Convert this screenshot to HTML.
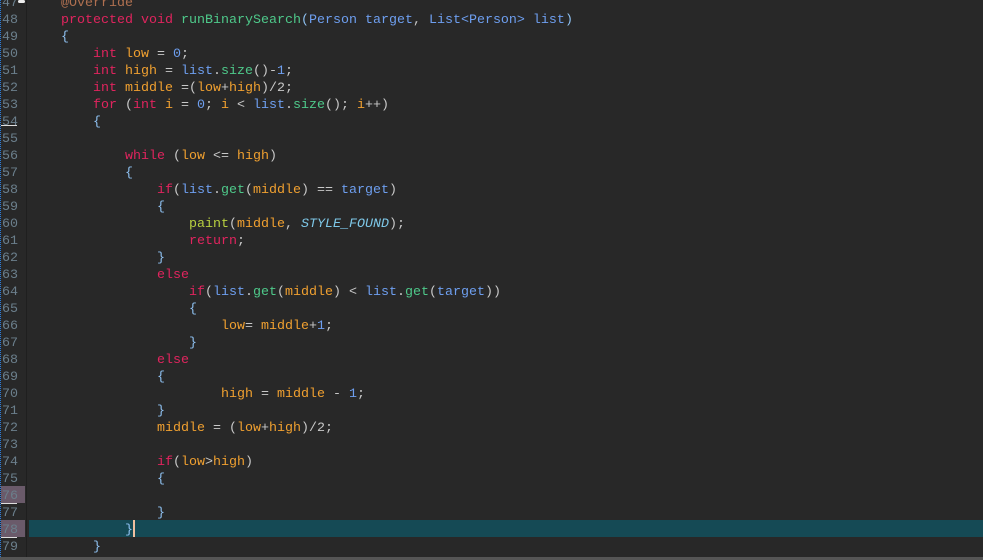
<!DOCTYPE html>
<html><head><meta charset="utf-8"><style>
body{margin:0;width:983px;height:560px;overflow:hidden;background:#282828;position:relative;font-family:"Liberation Mono",monospace;font-size:13.33px}
.g{position:absolute;left:0;top:0;width:26px;height:557px;background:#282828;border-left:1px dotted #2a7ad8}
.sep{position:absolute;left:26px;top:0;width:1px;height:557px;background:#1f1f1f}
.ln{position:absolute;left:2px;color:#6b7f8c;line-height:17px;height:17px;margin-top:1px}
.l{position:absolute;left:61px;line-height:17px;height:17px;white-space:pre;color:#c8c8c8;margin-top:1px}
.k{color:#e0245e}.v{color:#f0a030}.p{color:#6e9ff0}.m{color:#4ec98a}.y{color:#b8d040}.c{color:#7ec8e8;font-style:italic}.n{color:#6e9ff0}.b{color:#8ec0f0}
.cur{position:absolute;left:29px;top:520px;width:954px;height:17px;background:#154a55}
.bot{position:absolute;left:0;top:557px;width:983px;height:3px;background:#555}
</style></head><body>
<div class="g"></div><div class="sep"></div>
<div class="cur"></div>
<div style="position:absolute;left:1px;top:486px;width:24px;height:17px;background:#6a5a6a"></div>
<div style="position:absolute;left:1px;top:520px;width:24px;height:17px;background:#6a5a6a"></div>
<div style="position:absolute;left:1px;top:125px;width:16px;height:1px;background:#ddd"></div>
<div style="position:absolute;left:1px;top:503px;width:16px;height:1px;background:#ddd"></div>
<div style="position:absolute;left:1px;top:537px;width:16px;height:1px;background:#ddd"></div>
<div style="position:absolute;left:18px;top:0;width:7px;height:3px;background:#eee;border-radius:2px"></div>
<div style="position:absolute;left:133px;top:520px;width:2px;height:17px;background:#f0c0a0"></div>
<div class="l" style="top:-6px;color:#b07050">@Override</div>
<div class="l" style="top:11px"><span class="k">protected void</span> <span class="m">runBinarySearch</span><span class="b">(</span><span class="p">Person target</span>, <span class="p">List&lt;Person&gt; list</span><span class="b">)</span></div>
<div class="l" style="top:28px"><span class="b">{</span></div>
<div class="l" style="top:45px">    <span class="k">int</span> <span class="v">low</span> = <span class="n">0</span>;</div>
<div class="l" style="top:62px">    <span class="k">int</span> <span class="v">high</span> = <span class="p">list</span>.<span class="m">size</span>()-<span class="n">1</span>;</div>
<div class="l" style="top:79px">    <span class="k">int</span> <span class="v">middle</span> =(<span class="v">low</span>+<span class="v">high</span>)/2;</div>
<div class="l" style="top:96px">    <span class="k">for</span> (<span class="k">int</span> <span class="v">i</span> = <span class="n">0</span>; <span class="v">i</span> &lt; <span class="p">list</span>.<span class="m">size</span>(); <span class="v">i</span>++)</div>
<div class="l" style="top:113px">    <span class="b">{</span></div>
<div class="l" style="top:147px">        <span class="k">while</span> (<span class="v">low</span> &lt;= <span class="v">high</span>)</div>
<div class="l" style="top:164px">        <span class="b">{</span></div>
<div class="l" style="top:181px">            <span class="k">if</span>(<span class="p">list</span>.<span class="m">get</span>(<span class="v">middle</span>) == <span class="p">target</span>)</div>
<div class="l" style="top:198px">            <span class="b">{</span></div>
<div class="l" style="top:215px">                <span class="y">paint</span>(<span class="v">middle</span>, <span class="c">STYLE_FOUND</span>);</div>
<div class="l" style="top:232px">                <span class="k">return</span>;</div>
<div class="l" style="top:249px">            <span class="b">}</span></div>
<div class="l" style="top:266px">            <span class="k">else</span></div>
<div class="l" style="top:283px">                <span class="k">if</span>(<span class="p">list</span>.<span class="m">get</span>(<span class="v">middle</span>) &lt; <span class="p">list</span>.<span class="m">get</span>(<span class="p">target</span>))</div>
<div class="l" style="top:300px">                <span class="b">{</span></div>
<div class="l" style="top:317px">                    <span class="v">low</span>= <span class="v">middle</span>+<span class="n">1</span>;</div>
<div class="l" style="top:334px">                <span class="b">}</span></div>
<div class="l" style="top:351px">            <span class="k">else</span></div>
<div class="l" style="top:368px">            <span class="b">{</span></div>
<div class="l" style="top:385px">                    <span class="v">high</span> = <span class="v">middle</span> - <span class="n">1</span>;</div>
<div class="l" style="top:402px">            <span class="b">}</span></div>
<div class="l" style="top:419px">            <span class="v">middle</span> = (<span class="v">low</span>+<span class="v">high</span>)/2;</div>
<div class="l" style="top:453px">            <span class="k">if</span>(<span class="v">low</span>&gt;<span class="v">high</span>)</div>
<div class="l" style="top:470px">            <span class="b">{</span></div>
<div class="l" style="top:504px">            <span class="b">}</span></div>
<div class="l" style="top:521px">        <span class="b">}</span></div>
<div class="l" style="top:538px">    <span class="b">}</span></div>
<div class="bot"></div>
<div class="ln" style="top:-6px">47</div><div class="ln" style="top:11px">48</div><div class="ln" style="top:28px">49</div><div class="ln" style="top:45px">50</div><div class="ln" style="top:62px">51</div><div class="ln" style="top:79px">52</div><div class="ln" style="top:96px">53</div><div class="ln" style="top:113px">54</div><div class="ln" style="top:130px">55</div><div class="ln" style="top:147px">56</div><div class="ln" style="top:164px">57</div><div class="ln" style="top:181px">58</div><div class="ln" style="top:198px">59</div><div class="ln" style="top:215px">60</div><div class="ln" style="top:232px">61</div><div class="ln" style="top:249px">62</div><div class="ln" style="top:266px">63</div><div class="ln" style="top:283px">64</div><div class="ln" style="top:300px">65</div><div class="ln" style="top:317px">66</div><div class="ln" style="top:334px">67</div><div class="ln" style="top:351px">68</div><div class="ln" style="top:368px">69</div><div class="ln" style="top:385px">70</div><div class="ln" style="top:402px">71</div><div class="ln" style="top:419px">72</div><div class="ln" style="top:436px">73</div><div class="ln" style="top:453px">74</div><div class="ln" style="top:470px">75</div><div class="ln" style="top:487px">76</div><div class="ln" style="top:504px">77</div><div class="ln" style="top:521px">78</div><div class="ln" style="top:538px">79</div>
</body></html>
